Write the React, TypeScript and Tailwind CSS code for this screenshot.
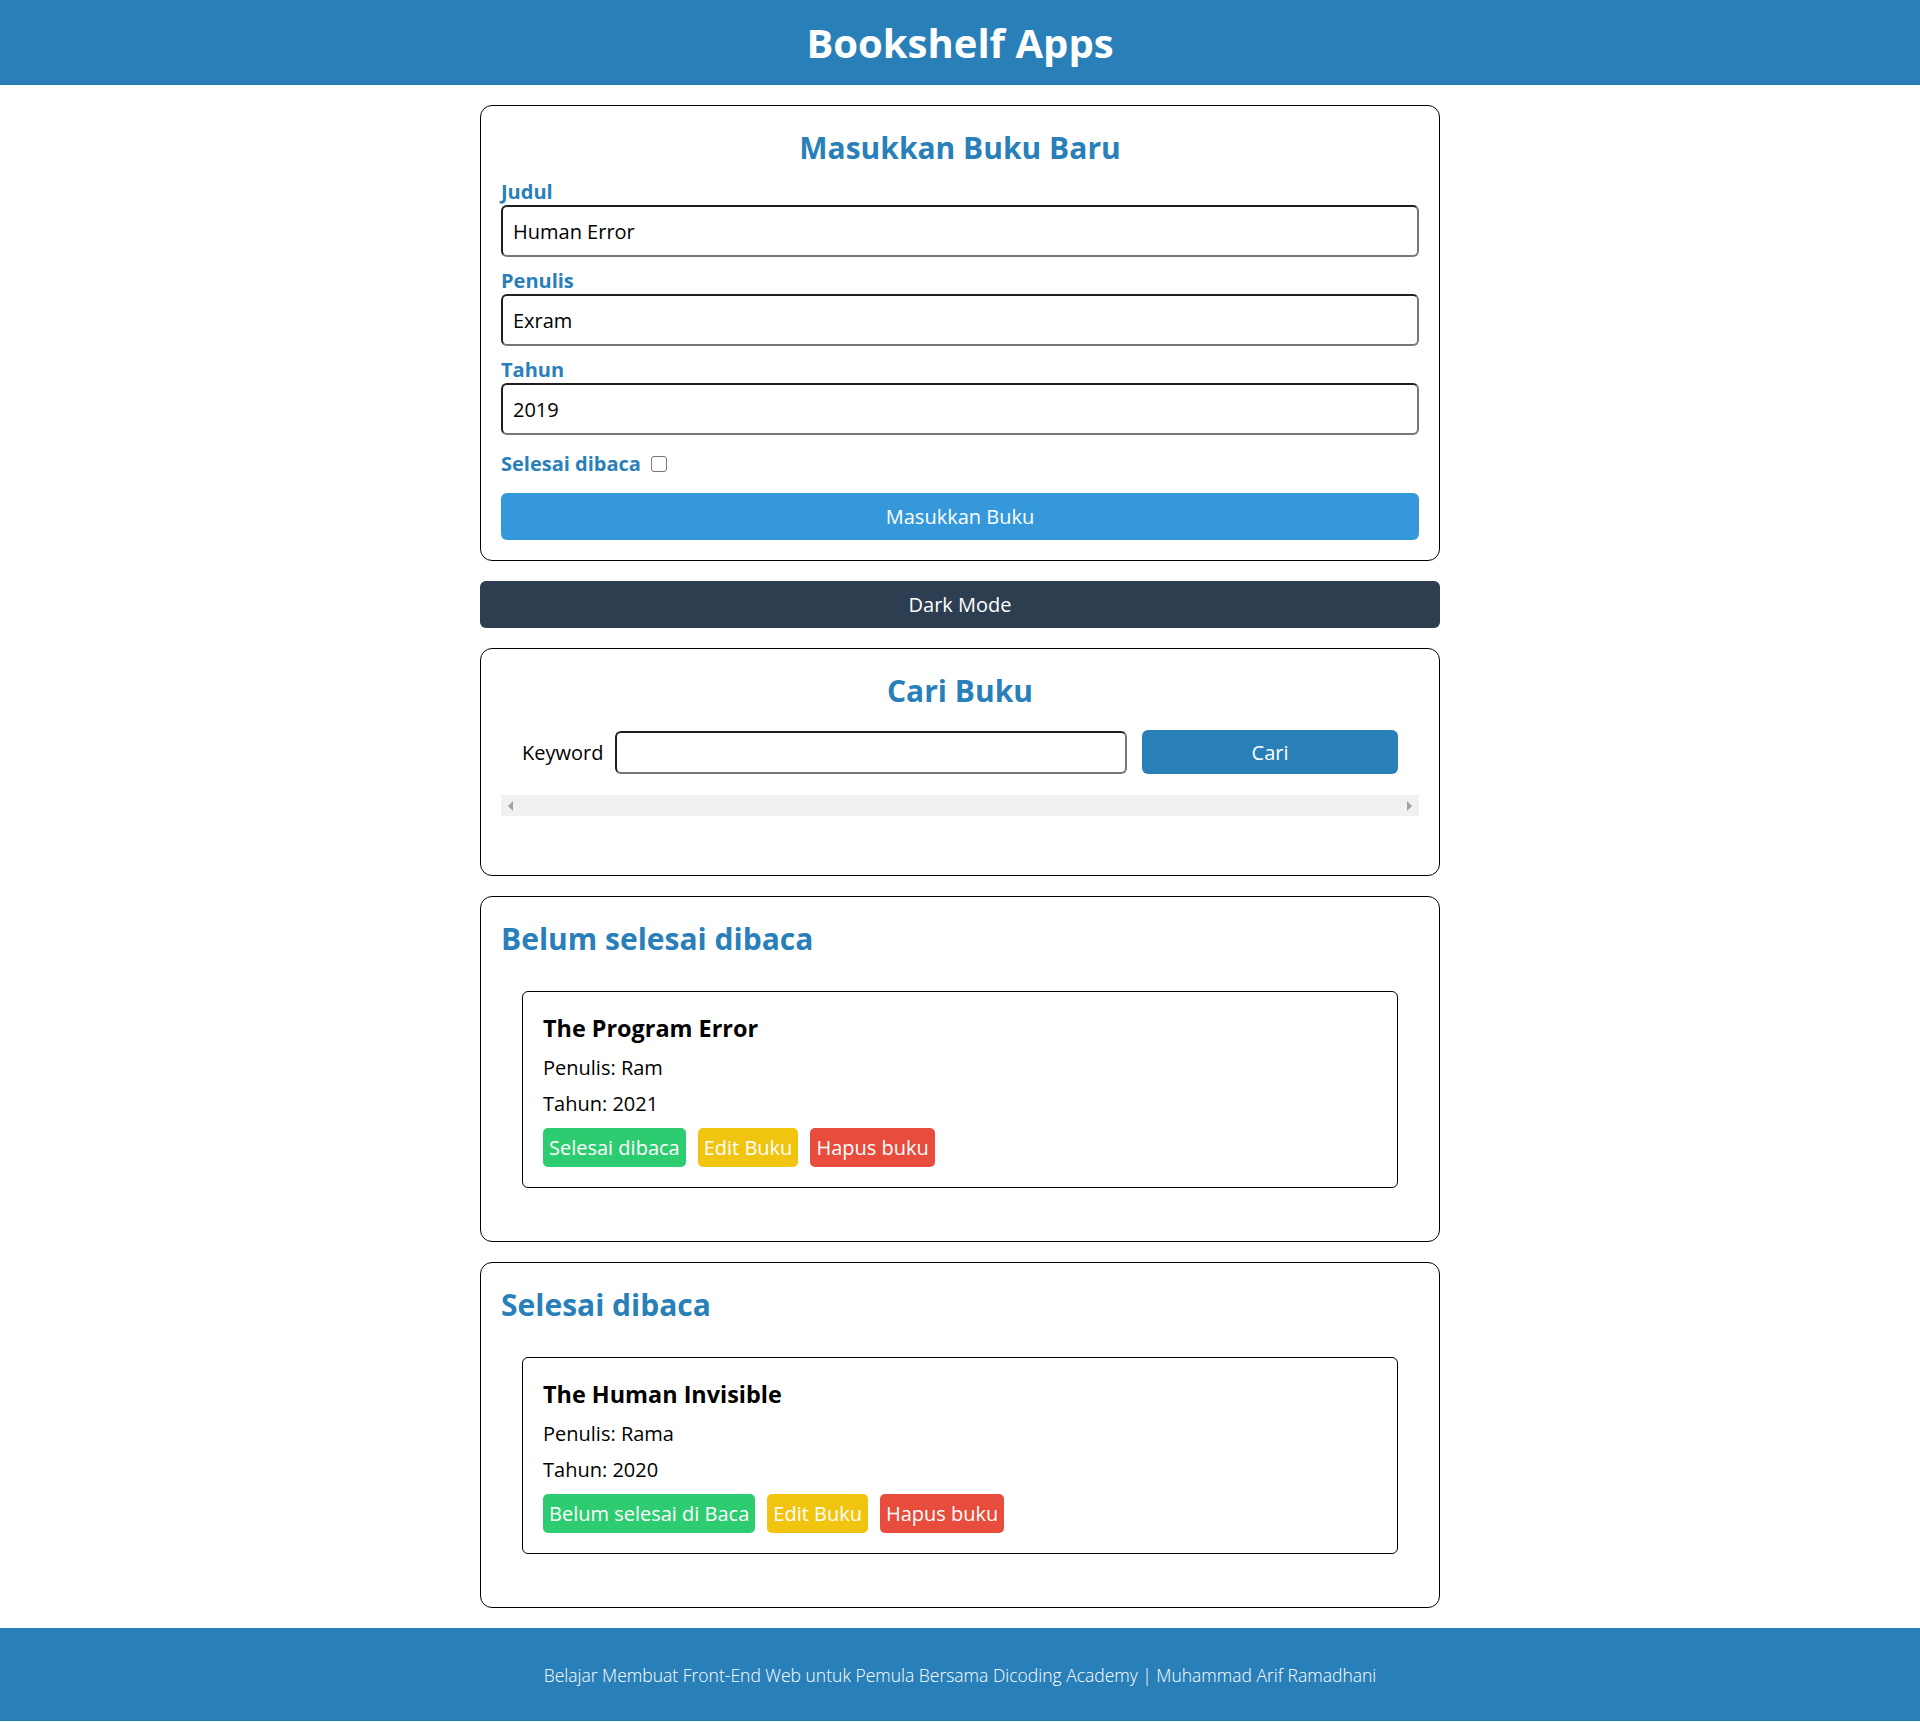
import React from "react";

const inputCls =
  "block w-full h-[52px] px-[10px] text-[20px] leading-[27px] text-black bg-white rounded-[6px] border-2 border-[#767676] border-t-[#1f1f1f] border-l-[#1f1f1f] outline-none";

function BookItem({
  title,
  author,
  year,
  toggleLabel,
}: {
  title: string;
  author: string;
  year: number;
  toggleLabel: string;
}) {
  return (
    <article className="border border-black rounded-[6px] p-[20px]">
      <h3 className="text-[23.4px] leading-[32px] font-bold text-black">{title}</h3>
      <p className="mt-[10px] text-[20px] leading-[27px] text-black">Penulis: {author}</p>
      <p className="mt-[9px] text-[20px] leading-[27px] text-black">Tahun: {year}</p>
      <div className="mt-[11px] flex gap-[12px]">
        <button className="h-[39px] px-[6px] rounded-[5px] bg-[#2ecc71] text-white text-[20px] leading-[27px]">
          {toggleLabel}
        </button>
        <button className="h-[39px] px-[6px] rounded-[5px] bg-[#f1c40f] text-white text-[20px] leading-[27px]">
          Edit Buku
        </button>
        <button className="h-[39px] px-[6px] rounded-[5px] bg-[#e74c3c] text-white text-[20px] leading-[27px]">
          Hapus buku
        </button>
      </div>
    </article>
  );
}

export default function App() {
  return (
    <div
      className="min-h-[1722px] flex flex-col bg-white"
      style={{ fontFamily: "'Open Sans', 'Noto Sans', Arial, sans-serif" }}
    >
      <header className="h-[85px] bg-[#2980b9] flex items-center justify-center">
        <h1 className="text-[40px] leading-[54px] font-bold text-white">Bookshelf Apps</h1>
      </header>

      <main className="w-[960px] mx-auto flex flex-col gap-[20px] pt-[20px] pb-[20px]">
        {/* Input section */}
        <section className="border border-black rounded-[12px] px-[20px] pt-[21px] pb-[20px]">
          <h2 className="text-[30px] leading-[41px] font-bold text-[#2980b9] text-center mb-[10px]">
            Masukkan Buku Baru
          </h2>
          <form className="flex flex-col" onSubmit={(e) => e.preventDefault()}>
            <label className="block text-[20px] leading-[27px] font-bold text-[#2980b9]">Judul</label>
            <input className={inputCls} defaultValue="Human Error" />
            <label className="block mt-[10px] text-[20px] leading-[27px] font-bold text-[#2980b9]">Penulis</label>
            <input className={inputCls} defaultValue="Exram" />
            <label className="block mt-[10px] text-[20px] leading-[27px] font-bold text-[#2980b9]">Tahun</label>
            <input className={inputCls} defaultValue="2019" />
            <div className="mt-[15px] flex items-center gap-[10px]">
              <span className="text-[20px] leading-[27px] font-bold text-[#2980b9]">Selesai dibaca</span>
              <span className="w-[16px] h-[16px] border border-[#767676] rounded-[3px] bg-white"></span>
            </div>
            <button
              type="submit"
              className="mt-[16px] h-[47px] w-full rounded-[6px] bg-[#3498db] text-white text-[20px] leading-[27px]"
            >
              Masukkan Buku
            </button>
          </form>
        </section>

        <button className="h-[47px] w-full rounded-[6px] bg-[#2c3e50] text-white text-[20px] leading-[27px]">
          Dark Mode
        </button>

        {/* Search section */}
        <section className="border border-black rounded-[12px] px-[20px] pt-[21px] pb-[20px]">
          <h2 className="text-[30px] leading-[41px] font-bold text-[#2980b9] text-center">Cari Buku</h2>
          <form className="px-[21px] pt-[19px] pb-[21px] flex items-center" onSubmit={(e) => e.preventDefault()}>
            <label className="text-[20px] leading-[27px] text-black mr-[12px]">Keyword</label>
            <input className="flex-1 min-w-0 h-[43px] px-[6px] text-[20px] rounded-[6px] bg-white border-2 border-[#767676] border-t-[#1f1f1f] border-l-[#1f1f1f] outline-none" />
            <button className="w-[256px] ml-[15px] h-[44px] rounded-[6px] bg-[#2980b9] text-white text-[20px] leading-[27px]">
              Cari
            </button>
          </form>
          <div className="h-[21px] bg-[#f1f1f1] flex items-center justify-between px-[7px]">
            <span className="w-0 h-0 border-y-[5px] border-y-transparent border-r-[5px] border-r-[#a3a3a3]"></span>
            <span className="w-0 h-0 border-y-[5px] border-y-transparent border-l-[5px] border-l-[#a3a3a3]"></span>
          </div>
          <div className="h-[39px]"></div>
        </section>

        {/* Unfinished */}
        <section className="border border-black rounded-[12px] px-[20px] pt-[21px] pb-[20px]">
          <h2 className="text-[30px] leading-[41px] font-bold text-[#2980b9]">Belum selesai dibaca</h2>
          <div className="px-[21px] pt-[32px] pb-[33px]">
            <BookItem title="The Program Error" author="Ram" year={2021} toggleLabel="Selesai dibaca" />
          </div>
        </section>

        {/* Finished */}
        <section className="border border-black rounded-[12px] px-[20px] pt-[21px] pb-[20px]">
          <h2 className="text-[30px] leading-[41px] font-bold text-[#2980b9]">Selesai dibaca</h2>
          <div className="px-[21px] pt-[32px] pb-[33px]">
            <BookItem title="The Human Invisible" author="Rama" year={2020} toggleLabel="Belum selesai di Baca" />
          </div>
        </section>
      </main>

      <footer className="h-[93px] bg-[#2980b9] flex items-center justify-center">
        <p className="text-[17.5px] leading-[24px] font-light text-white">
          Belajar Membuat Front-End Web untuk Pemula Bersama Dicoding Academy | Muhammad Arif Ramadhani
        </p>
      </footer>
    </div>
  );
}
